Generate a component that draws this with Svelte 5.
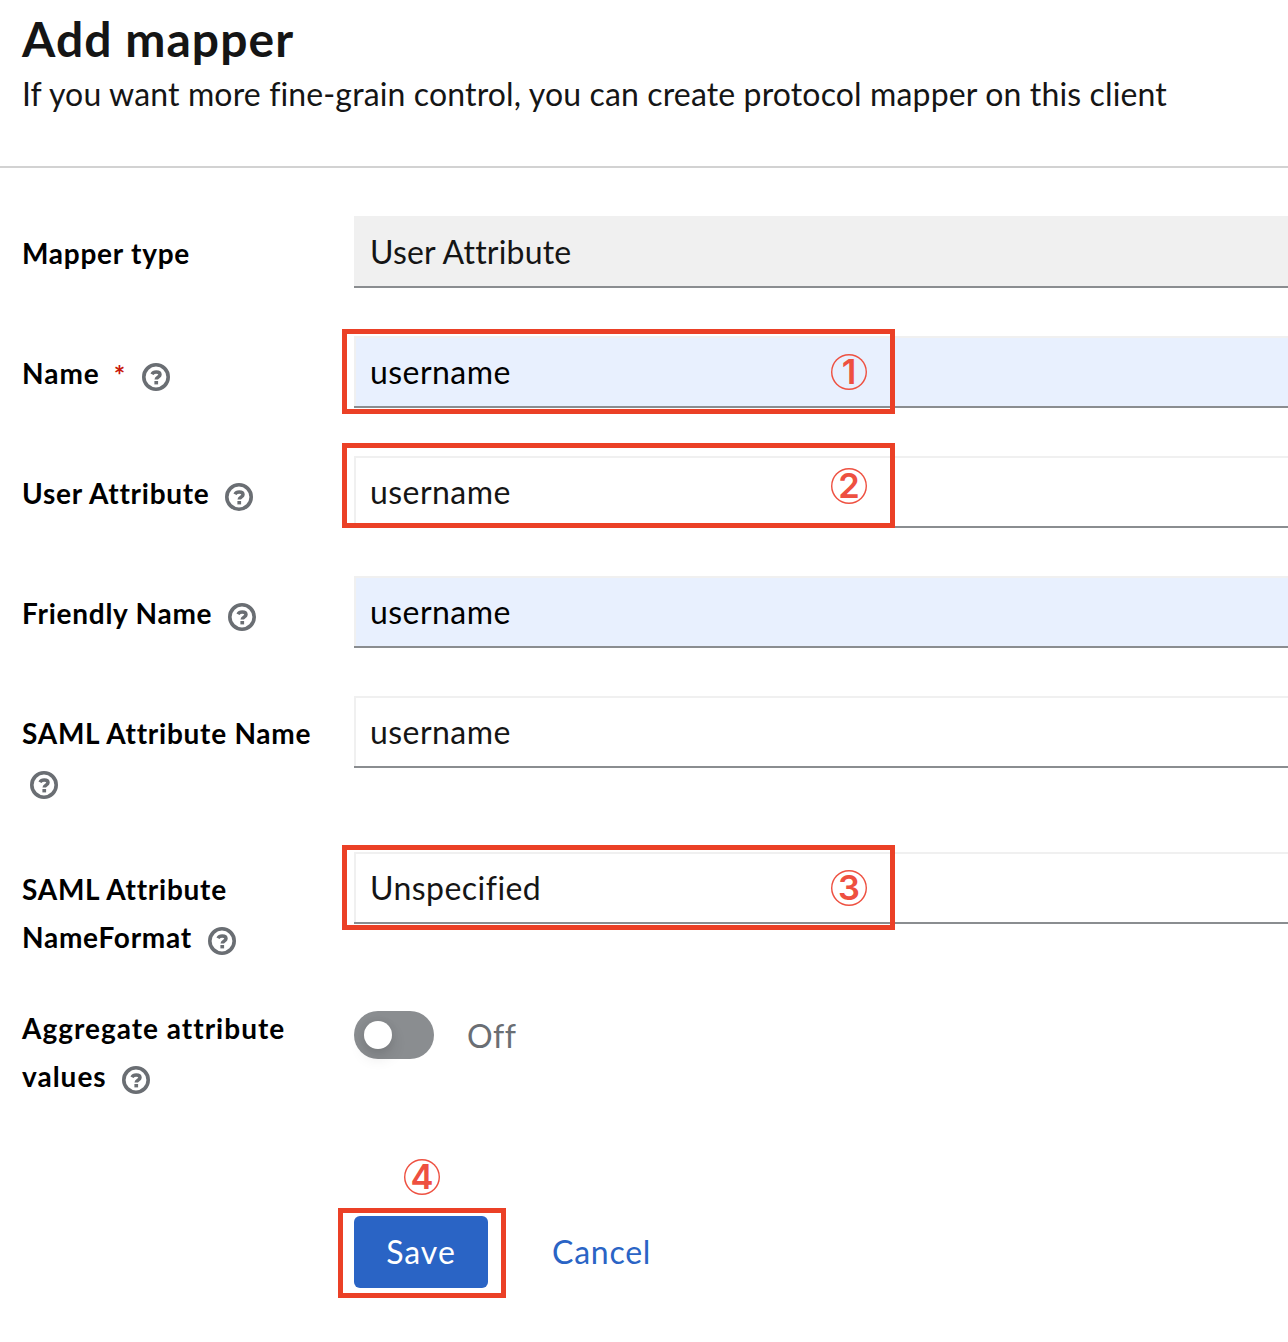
<script>
  const fields = [
    { label: 'Mapper type', value: 'User Attribute', kind: 'select', tight: true },
    { label: 'Name', value: 'username', kind: 'filled', required: true, help: true, wide: true, mark: 1 },
    { label: 'User Attribute', value: 'username', kind: 'plain', help: true, mark: 2, raised: true },
    { label: 'Friendly Name', value: 'username', kind: 'filled', help: true },
    { label: 'SAML Attribute Name', value: 'username', kind: 'plain', help: true },
    { label: 'SAML Attribute NameFormat', value: 'Unspecified', kind: 'plain', help: true, mark: 3 },
  ];
</script>

{#snippet helpIcon()}
  <span class="help" role="img" aria-label="Help">
    <svg viewBox="0 0 28 28" width="28" height="28" fill="none" stroke="currentColor">
      <circle cx="14" cy="14" r="12.2" stroke-width="3.6" />
      <path d="M10 11.2C10.8 9.7 12.2 9 14.2 9c2.4 0 3.8 1 3.8 2.7 0 2.4-3.8 2-3.8 4.9" stroke-width="3.5" />
      <path d="M12.4 19.7h3.7" stroke-width="3.4" />
    </svg>
  </span>
{/snippet}

<main>
  <header>
    <h1>Add mapper</h1>
    <p>If you want more fine-grain control, you can create protocol mapper on this client</p>
  </header>

  <form onsubmit={(e) => e.preventDefault()}>
    {#each fields as f}
      <div class="row">
        <div class="label" class:wide={f.wide}>
          <span class="text">{f.label}</span>{#if f.required}<span class="star">*</span>{/if}
          {#if f.help}{@render helpIcon()}{/if}
        </div>
        <div class="control {f.kind}" class:tight={f.tight}>
          {f.value}
          {#if f.mark}
            <div class="frame" class:raised={f.raised}><span class="badge">{f.mark}</span></div>
          {/if}
        </div>
      </div>
    {/each}

    <div class="row toggle-row">
      <div class="label wide">
        <span class="text">Aggregate attribute values</span>
        {@render helpIcon()}
      </div>
      <div class="toggle">
        <span class="track"><span class="knob"></span></span>
        <span class="state">Off</span>
      </div>
    </div>

    <div class="actions">
      <div class="save-wrap">
        <button class="save" type="submit">Save</button>
        <div class="frame save-frame"></div>
        <span class="badge above">4</span>
      </div>
      <button class="cancel" type="button">Cancel</button>
    </div>
  </form>
</main>

<style>
  :global(body) {
    background: #fff;
    overflow: hidden;
  }
  main {
    height: 1342px;
    overflow: hidden;
    color: #151515;
    font-family: Lato, sans-serif;
    font-size: 32px;
  }
  header {
    box-sizing: border-box;
    height: 168px;
    padding: 8px 0 0 22px;
    border-bottom: 2px solid #d2d2d2;
  }
  h1 {
    margin: 0;
    font-size: 48px;
    font-weight: 700;
    line-height: 62px;
    letter-spacing: 1.05px;
  }
  p {
    margin: 0;
    line-height: 47px;
    letter-spacing: 0.14px;
    white-space: nowrap;
  }
  form {
    display: flex;
    flex-direction: column;
    gap: 48px;
    padding: 48px 0 0 22px;
  }
  .row {
    display: grid;
    grid-template-columns: 332px 1fr;
    align-items: start;
  }
  .label {
    padding: 13px 32px 0 0;
    margin-bottom: -1px;
    color: #000;
    font-size: 28px;
    font-weight: 700;
    line-height: 48px;
    letter-spacing: 0.75px;
  }
  .wide {
    letter-spacing: 1px;
  }
  .star {
    margin-left: 14px;
    color: #c9190b;
    font-size: 27px;
    line-height: 1;
    vertical-align: -1px;
  }
  .help {
    display: inline-block;
    width: 28px;
    height: 28px;
    margin-left: 8px;
    color: #6a6e73;
    line-height: 0;
    vertical-align: -7px;
  }
  .control {
    position: relative;
    box-sizing: border-box;
    height: 72px;
    padding-left: 16px;
    box-shadow: inset 0 -2px #8a8d90, inset 2px 2px #f0f0f0;
    line-height: 71px;
    letter-spacing: 0.45px;
  }
  .tight {
    letter-spacing: 0.2px;
  }
  .select {
    background: #f0f0f0;
  }
  .filled {
    background: #e8f0fe;
    color: #000;
  }
  .frame {
    position: absolute;
    box-sizing: border-box;
    top: -7px;
    left: -12px;
    display: flex;
    align-items: center;
    justify-content: flex-end;
    width: 553px;
    height: 85px;
    padding-right: 23px;
    border: 5px solid #eb4026;
  }
  .raised {
    top: -13px;
  }
  .badge {
    display: flex;
    align-items: center;
    justify-content: center;
    width: 36px;
    height: 36px;
    border-radius: 50%;
    box-shadow: inset 0 0 0 1.4px #ee5040;
    color: #ee5040;
    font: 600 34.5px/36px Inter, sans-serif;
    letter-spacing: 0;
  }
  .toggle-row {
    height: 96px;
  }
  .toggle-row .label {
    padding-top: 0;
    margin-top: -4px;
  }
  .toggle {
    display: flex;
    align-items: center;
    gap: 33px;
    margin-top: 3px;
    color: #6a6e73;
    line-height: 47px;
  }
  .track {
    display: flex;
    box-sizing: border-box;
    align-items: center;
    width: 80px;
    height: 48px;
    padding-left: 10px;
    border-radius: 24px;
    background: #8a8d90;
  }
  .knob {
    width: 28px;
    height: 28px;
    border-radius: 50%;
    background: #fff;
    box-shadow: 0 8px 16px rgba(3, 3, 3, 0.12), 0 0 8px rgba(3, 3, 3, 0.06);
  }
  .state {
    letter-spacing: 0.5px;
  }
  .actions {
    display: flex;
    gap: 32px;
    padding: 64px 0 0 332px;
  }
  .save-wrap {
    position: relative;
  }
  button {
    height: 72px;
    border: 0;
    font: 32px/70px Lato, sans-serif;
  }
  .save {
    display: block;
    width: 134px;
    padding: 0;
    border-radius: 6px;
    background: #2a64c5;
    color: #fff;
    letter-spacing: 1px;
  }
  .cancel {
    padding: 0 32px;
    background: none;
    color: #2a64c5;
    letter-spacing: 0.75px;
  }
  .save-frame {
    top: -8px;
    left: -16px;
    width: 168px;
    height: 90px;
  }
  .above {
    position: absolute;
    top: -57.5px;
    left: 50px;
  }
</style>
